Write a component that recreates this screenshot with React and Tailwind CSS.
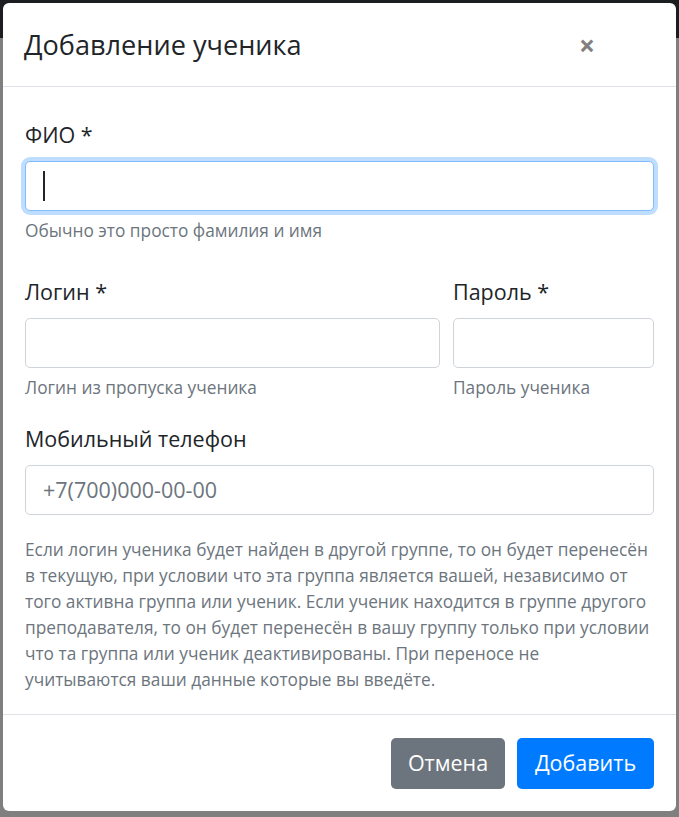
import React from "react";

function Label({ children }) {
  return <label className="block text-[21.5px] leading-[32px] text-[#212529]">{children}</label>;
}

function Help({ children }) {
  return <p className="mt-[7px] text-[17.3px] leading-[25px] text-[#6c757d]">{children}</p>;
}

function Input({ placeholder, focused }) {
  return (
    <div
      className={
        "relative mt-[10px] h-[50px] rounded-[5px] border bg-white " +
        (focused
          ? "border-[#80bdff] shadow-[0_0_0_4px_#bfdeff]"
          : "border-[#ced4da]")
      }
    >
      {focused && <span className="absolute left-[17px] top-[9px] h-[30px] w-[2px] bg-[#212529]" />}
      {placeholder && (
        <span className="absolute left-[17px] top-[8px] text-[21.5px] leading-[32px] text-[#6c757d]">
          {placeholder}
        </span>
      )}
    </div>
  );
}

export default function App() {
  return (
    <div
      className="relative h-[817px] w-[679px] overflow-hidden bg-[#7f7f7f]"
      style={{ fontFamily: '"Open Sans", "Noto Sans", sans-serif' }}
    >
      {/* page behind the overlay */}
      <div className="absolute left-0 top-0 h-[38px] w-full bg-[#1b1d20]" />

      {/* modal */}
      <div className="absolute left-[3px] top-[3px] flex h-[808px] w-[673px] flex-col rounded-[6px] bg-white">
        {/* header */}
        <div className="flex h-[84px] items-center justify-between border-b border-[#dee2e6] pl-[21px] pr-[81px]">
          <h5 className="text-[27.1px] leading-[38px] text-[#212529]">Добавление ученика</h5>
          <span className="text-[28px] font-bold leading-none text-[#808080]">×</span>
        </div>

        {/* body */}
        <div className="flex-1 px-[22px] pt-[32px]">
          <Label>ФИО *</Label>
          <Input focused />
          <Help>Обычно это просто фамилия и имя</Help>

          <div className="mt-[33px] grid grid-cols-[415px_1fr] gap-[13px]">
            <div>
              <Label>Логин *</Label>
              <Input />
              <Help>Логин из пропуска ученика</Help>
            </div>
            <div>
              <Label>Пароль *</Label>
              <Input />
              <Help>Пароль ученика</Help>
            </div>
          </div>

          <div className="mt-[23px]">
            <Label>Мобильный телефон</Label>
            <Input placeholder="+7(700)000-00-00" />
          </div>

          <p className="mt-[22px] text-[17.3px] leading-[26px] text-[#6c757d]">
            Если логин ученика будет найден в другой группе, то он будет перенесён в текущую, при
            условии что эта группа является вашей, независимо от того активна группа или ученик.
            Если ученик находится в группе другого преподавателя, то он будет перенесён в вашу
            группу только при условии что та группа или ученик деактивированы. При переносе не
            учитываются ваши данные которые вы введёте.
          </p>
        </div>

        {/* footer */}
        <div className="flex h-[97px] items-center justify-end gap-[12px] border-t border-[#dee2e6] pr-[22px]">
          <button className="h-[51px] w-[114px] rounded-[5px] bg-[#6c757d] text-[21.5px] text-white">
            Отмена
          </button>
          <button className="h-[51px] w-[137px] rounded-[5px] bg-[#007bff] text-[21.5px] text-white">
            Добавить
          </button>
        </div>
      </div>
    </div>
  );
}
